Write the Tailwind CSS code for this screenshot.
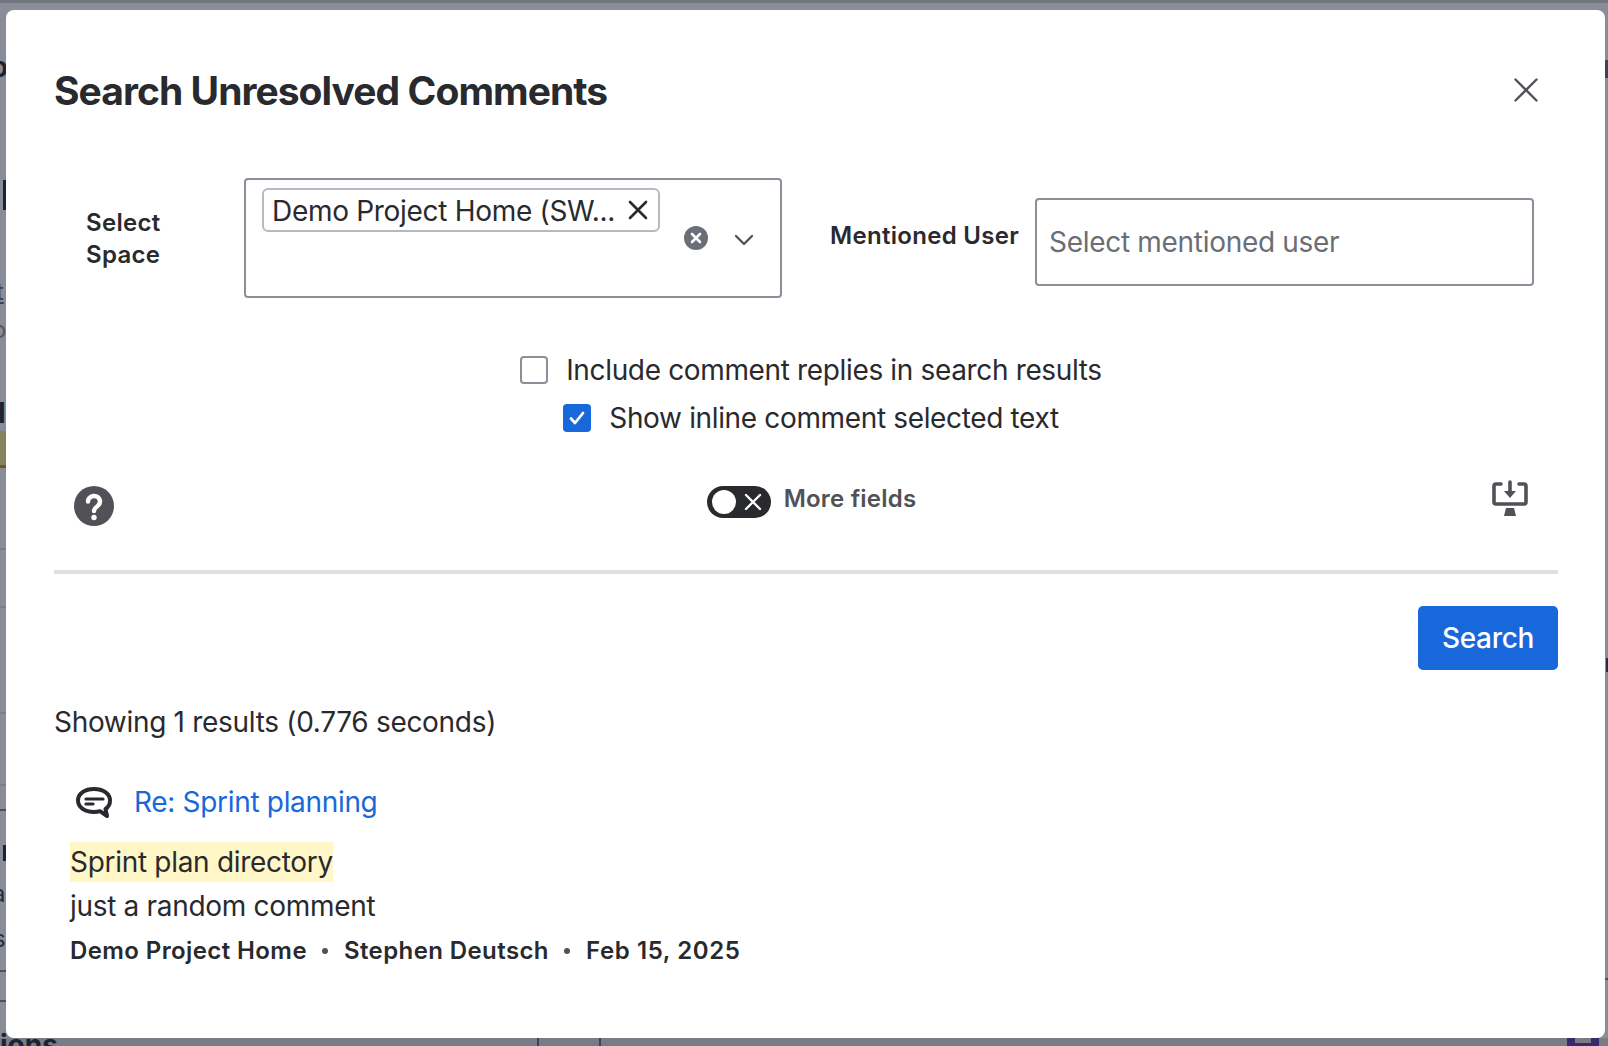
<!DOCTYPE html>
<html lang="en">
<head>
  <meta charset="UTF-8" />
  <title>Search Unresolved Comments</title>
  <script src="https://cdn.jsdelivr.net/npm/@tailwindcss/browser@4"></script>
</head>
<body class="relative h-[1046px] w-[1608px] overflow-hidden bg-[#8a8c97] font-['Inter',sans-serif] text-[#292a2e]">
  <!-- page behind the dimmed overlay -->
  <div class="absolute left-0 top-0 h-[3px] w-full bg-[#74767f]"></div>
  <div class="absolute left-0 top-[1038px] h-[8px] w-full bg-[#797c87]"></div>
  <div class="absolute left-0 top-[431px] h-[37px] w-[6px] border-b-[3px] border-[#6f5a20] bg-[#85825c]"></div>
  <div class="absolute left-[3px] top-[180px] h-[30px] w-[3px] bg-[#1f2230]"></div>
  <div class="absolute left-[3px] top-[845px] h-[16px] w-[3px] bg-[#1f2230]"></div>
  <span class="absolute left-[-9px] top-[46px] text-[28px] font-bold text-[#1f2230]">o</span>
  <span class="absolute left-[-4px] top-[274px] text-[24px] text-[#3f4250] underline">t</span>
  <span class="absolute left-[-8px] top-[312px] text-[24px] text-[#565964]">o</span>
  <span class="absolute left-[-12px] top-[392px] text-[28px] font-bold text-[#1f2230]">d</span>
  <span class="absolute left-[-8px] top-[876px] text-[24px] text-[#2a2d3a]">a</span>
  <span class="absolute left-[-7px] top-[921px] text-[24px] text-[#2a2d3a]">s</span>
  <div class="absolute left-0 top-[548px] h-[2px] w-[6px] bg-[#7a7c86]"></div>
  <div class="absolute left-0 top-[606px] h-[2px] w-[6px] bg-[#7a7c86]"></div>
  <div class="absolute left-0 top-[712px] h-[2px] w-[6px] bg-[#7a7c86]"></div>
  <div class="absolute left-0 top-[784px] h-[2px] w-[6px] bg-[#7a7c86]"></div>
  <div class="absolute left-0 top-[809px] h-[2px] w-[6px] bg-[#4d505c]"></div>
  <div class="absolute left-0 top-[970px] h-[2px] w-[6px] bg-[#4d505c]"></div>
  <div class="absolute left-0 top-[1000px] h-[2px] w-[6px] bg-[#4d505c]"></div>
  <div class="absolute left-[1605px] top-[60px] h-[18px] w-[3px] bg-[#3f4250]"></div>
  <div class="absolute left-[1606px] top-[658px] h-[14px] w-[2px] bg-[#2a2d3a]"></div>
  <div class="absolute left-[1605px] top-[978px] h-[2px] w-[3px] bg-[#4d505c]"></div>
  <div class="absolute left-[1567px] top-[1038px] h-[8px] w-[32px] bg-[#352c6e]">
    <div class="mx-auto h-[5px] w-[16px] bg-[#797c87]"></div>
  </div>
  <div class="absolute left-[537px] top-[1038px] h-[8px] w-[2px] bg-[#3f4250]"></div>
  <div class="absolute left-[599px] top-[1038px] h-[8px] w-[2px] bg-[#3f4250]"></div>
  <div class="absolute left-0 top-[1031px] text-[28px] font-bold leading-[28px] text-[#1f2230]">ions</div>

  <!-- Modal -->
  <div class="absolute left-[6px] top-[10px] flex h-[1028px] w-[1599px] flex-col rounded-[8px] bg-white pl-[48px] pr-[47px] pt-[57px]">
    <div class="flex h-[48px] items-center justify-between pr-[20px]">
      <h1 class="text-[39px] font-bold leading-[48px] tracking-[-0.95px]">Search Unresolved Comments</h1>
      <svg class="mt-[-2px] h-[24px] w-[24px] text-[#505258]" viewBox="0 0 24 24" fill="none" stroke="currentColor" stroke-width="2.4" stroke-linecap="round"><path d="M1.500 1.500 22.500 22.500M22.500 1.500 1.500 22.500" /></svg>
    </div>

    <!-- Filters -->
    <div class="mt-[63px] flex h-[120px] items-center pl-[32px]">
      <div class="mt-[2px] w-[158px] text-[24px] font-semibold leading-[32px] tracking-[0.3px]">Select<br />Space</div>
      <div class="relative h-[120px] w-[538px] rounded-[4px] border-2 border-[#8c8f97] pl-[16px] pt-[8px]">
        <div class="flex h-[44px] w-[398px] items-center justify-between rounded-[6px] border-2 border-[#b7b9be] pl-[8px] pr-[10px] text-[28px] tracking-[-0.3px]">
          <span class="mt-[1px]">Demo Project Home (SW...</span>
          <svg class="h-[20px] w-[20px]" viewBox="0 0 20 20" fill="none" stroke="#292a2e" stroke-width="2.6" stroke-linecap="round"><path d="M2 2 18 18M18 2 2 18" /></svg>
        </div>
        <div class="absolute left-[438px] top-[46px] flex h-[24px] w-[24px] items-center justify-center rounded-full bg-[#6b6e76]">
          <svg class="h-[12px] w-[12px]" viewBox="0 0 12 12" fill="none" stroke="white" stroke-width="2.600" stroke-linecap="round"><path d="M2 2 10 10M10 2 2 10" /></svg>
        </div>
        <svg class="absolute left-[488px] top-[54px] h-[12px] w-[20px]" viewBox="0 0 20 12" fill="none" stroke="#505258" stroke-width="2.4" stroke-linecap="round" stroke-linejoin="round"><path d="M2 2 10 10 18 2" /></svg>
      </div>
      <div class="ml-[48px] mt-[-4px] w-[188px] whitespace-nowrap text-[24px] font-semibold leading-[32px] tracking-[0.3px]">Mentioned User</div>
      <div class="ml-[17px] mt-[8px] flex h-[88px] w-[499px] items-center rounded-[4px] border-2 border-[#8c8f97] pl-[12px] text-[28px] tracking-[-0.3px] text-[#6b6e76]">Select mentioned user</div>
    </div>

    <!-- Checkboxes -->
    <div class="mt-[58px] flex flex-col items-center gap-[20px] pl-[10px]">
      <label class="flex h-[28px] items-center gap-[18px] text-[28px] tracking-[-0.35px]">
        <span class="h-[28px] w-[28px] rounded-[4px] border-2 border-[#8c8f97]"></span>
        <span>Include comment replies in search results</span>
      </label>
      <label class="flex h-[28px] items-center gap-[18px] text-[28px] tracking-[-0.35px]">
        <span class="flex h-[28px] w-[28px] items-center justify-center rounded-[4px] bg-[#1868db]">
          <svg class="h-[16px] w-[16px]" viewBox="0 0 16 16" fill="none" stroke="white" stroke-width="2.8" stroke-linecap="round" stroke-linejoin="round"><path d="M2 8.500 6 13 14 3" /></svg>
        </span>
        <span>Show inline comment selected text</span>
      </label>
    </div>

    <!-- Toolbar -->
    <div class="mt-[54px] flex h-[40px] items-start justify-between pl-[20px] pr-[30px]">
      <svg class="h-[40px] w-[40px]" viewBox="0 0 40 40">
        <circle cx="20" cy="20" r="20" fill="#505258" />
        <path d="M14 15.500a6 5.500 0 1 1 9.800 4.300c-2.300 1.700-3.800 2.600-3.800 5.200" fill="none" stroke="white" stroke-width="4.400" stroke-linecap="round" />
        <circle cx="20" cy="31.500" r="2.700" fill="white" />
      </svg>
      <div class="ml-[17px] flex items-start gap-[13px]">
        <div class="relative h-[32px] w-[64px] rounded-full bg-[#292a2e]">
          <div class="absolute left-[5px] top-[4px] h-[24px] w-[24px] rounded-full bg-white"></div>
          <svg class="absolute left-[37px] top-[7px] h-[18px] w-[18px]" viewBox="0 0 18 18" fill="none" stroke="white" stroke-width="2.4" stroke-linecap="round"><path d="M2 2 16 16M16 2 2 16" /></svg>
        </div>
        <span class="mt-[1px] text-[24px] font-semibold leading-[24px] tracking-[0.2px] text-[#505258]">More fields</span>
      </div>
      <svg class="mt-[-6px] h-[36px] w-[36px]" viewBox="0 0 36 36" fill="none" stroke="#505258" stroke-width="3.6" stroke-linecap="round" stroke-linejoin="round">
        <path d="M9 4H4a2 2 0 0 0-2 2v16a2 2 0 0 0 2 2h28a2 2 0 0 0 2-2V6a2 2 0 0 0-2-2h-5" />
        <path d="M18 2v12" />
        <path d="M12 11h12l-6 7z" fill="#505258" stroke="none" />
        <path d="M14 28h8l2 8H12z" fill="#505258" stroke="none" />
      </svg>
    </div>

    <div class="mt-[44px] h-[4px] w-full shrink-0 bg-[#dfdfe4]"></div>

    <button class="mt-[32px] h-[64px] w-[140px] self-end rounded-[5px] bg-[#1868db] text-[28px] font-medium tracking-[-0.3px] text-white">Search</button>

    <!-- Results -->
    <p class="mt-[32px] text-[28px] leading-[40px] tracking-[-0.31px]">Showing 1 results (0.776 seconds)</p>
    <div class="mt-[40px] flex h-[40px] items-center gap-[22px] pl-[22px]">
      <svg class="h-[31px] w-[36px]" viewBox="0 0 36 31" fill="none" stroke="#292a2e" stroke-width="4" stroke-linecap="round" stroke-linejoin="round">
        <path d="M18 2C9 2 2 6.500 2 13.500S9 25 18 25c2 0 4-.2 6-.8L31 29l-1.500-7C32.500 20 34 17 34 13.500 34 6.500 27 2 18 2z" />
        <path d="M10 12H27M10 17H17" stroke-width="3.200" />
      </svg>
      <a class="text-[28px] leading-[40px] tracking-[-0.32px] text-[#1868db]">Re: Sprint planning</a>
    </div>
    <div class="mt-[20px] pl-[16px]">
      <span class="block h-[40px] w-fit bg-[#fff7c8] text-[28px] leading-[40px] tracking-[-0.3px]">Sprint plan directory</span>
      <p class="mt-[4px] text-[28px] leading-[40px] tracking-[-0.31px]">just a random comment</p>
      <div class="mt-[7px] flex items-center text-[24px] font-semibold leading-[36px] tracking-[0.4px]">
        <span>Demo Project Home</span>
        <span class="ml-[15px] mr-[16px] h-[6px] w-[6px] rounded-full bg-[#505258]"></span>
        <span>Stephen Deutsch</span>
        <span class="ml-[15px] mr-[16px] h-[6px] w-[6px] rounded-full bg-[#505258]"></span>
        <span class="tracking-[0.6px]">Feb 15, 2025</span>
      </div>
    </div>
  </div>
</body>
</html>
